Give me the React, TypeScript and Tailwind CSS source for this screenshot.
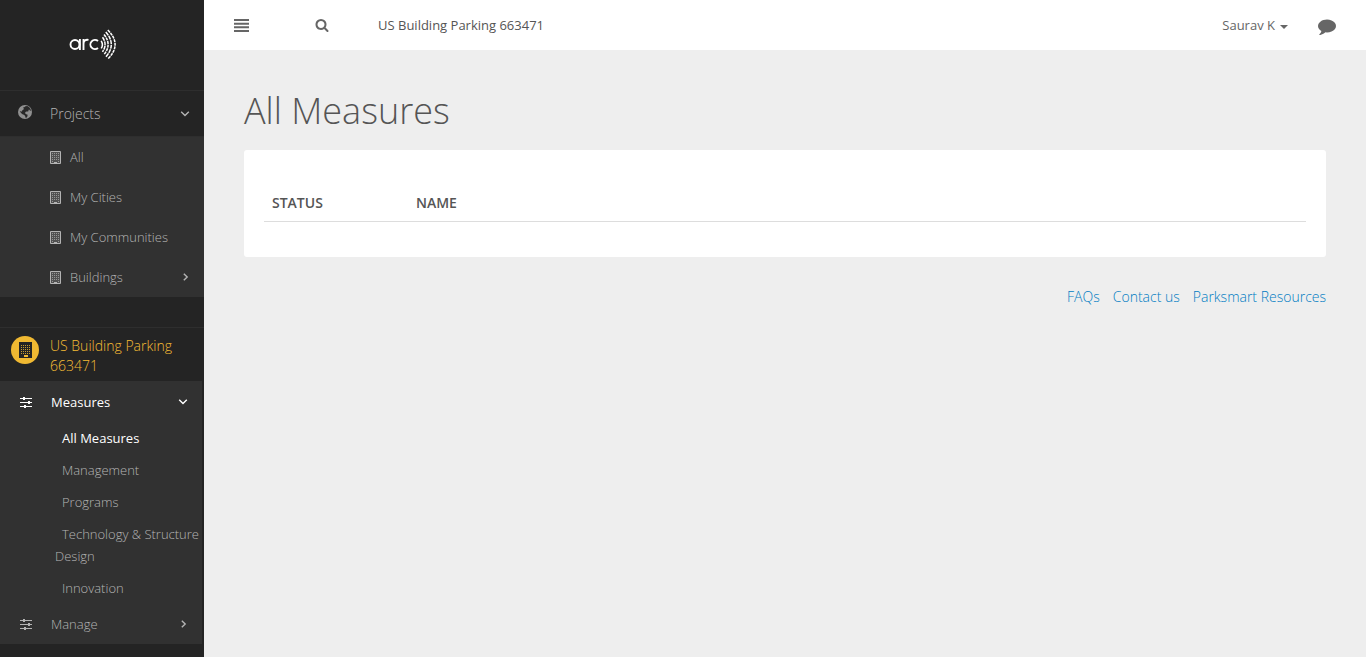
import type { ReactNode } from "react";

function Logo() {
  return (
    <svg className="h-8 w-12" viewBox="0 0 48 32" fill="none" stroke="#fff" role="img" aria-label="arc">
      <g strokeWidth="1.900">
        <circle cx="6" cy="15.500" r="4.500" />
        <path d="M10.900 10v11M14.500 21V10M14.500 15c0-3.200 2-4.600 5-4.100M29 12a4.600 4.600 0 1 0 0 7" />
      </g>
      <g strokeWidth="1.500">
        <path d="M32.200 11.800q2.400 4 0 7.600" />
        <path d="M33.500 8.300q5.200 7.200 0 14.600" strokeDasharray="4 .6" />
        <path d="M35 5.500q8.200 10 0 20" strokeDasharray="3 .7" />
        <path d="M36.800 3q11 12.500 0 25" strokeDasharray="4 .7" />
        <path d="M38.800 1q14.600 14.500 0 29" strokeDasharray="3 .7" />
      </g>
    </svg>
  );
}

function Globe() {
  return (
    <svg className="size-[14px]" viewBox="0 0 14 14" aria-hidden="true">
      <circle cx="7" cy="7" r="7" fill="#909090" />
      <path
        fill="#292929"
        d="M7.500 1.200 9.300 1l2 1.200 1.300 2 .3 1.800-1-.4-.7-1-.9.300.4 1.100-.9.600-1.300-.2-1.100.6-.3 1.300 1 1 1.300.3.200 1.300-.9 1.700-1 .3-.5-1.600-.9-1.300-1.800-.7-1.500-1.300L1.800 6l1.300.6.9-.2.3-1.100 1.300-.9.200-1L5 2.600l1.200-.3z"
      />
    </svg>
  );
}

function Building({ className = "" }: { className?: string }) {
  return (
    <svg className={className} viewBox="0 0 11 13" fill="none" stroke="currentColor" aria-hidden="true">
      <path fill="currentColor" fillOpacity=".25" d="M.5.500h10v12H.5z" />
      <path strokeOpacity=".7" strokeDasharray="1 1" d="M2 2.500h7M2 4.500h7M2 6.500h7M2 8.500h7" />
      <path strokeOpacity=".7" d="M2 10.500h1M8 10.500h1" />
      <path d="M4 11.500h3" />
    </svg>
  );
}

function Sliders() {
  return (
    <svg className="h-[11px] w-3" viewBox="0 0 12 11" stroke="currentColor" aria-hidden="true">
      <path d="M0 1.500h12M0 5.500h12M0 9.500h12" />
      <path strokeWidth="2" d="M4 0v3M9 4v3M5 8v3" />
    </svg>
  );
}

function Chevron({ down = false }: { down?: boolean }) {
  return (
    <svg className="size-[10px] shrink-0" viewBox="0 0 10 10" fill="none" stroke="currentColor" strokeWidth="1.400" aria-hidden="true">
      <path d={down ? "M1.200 2.800 5 6.500l3.800-3.700" : "M3.800 1.700 7.200 5 3.800 8.300"} />
    </svg>
  );
}

function ProjectLink({ children, expandable = false }: { children: ReactNode; expandable?: boolean }) {
  return (
    <li>
      <a href="#" className="flex h-10 items-center pr-[14px] pl-[50px] text-[13px] leading-5">
        <Building className="mr-[9px] h-[13px] w-[11px]" />
        <span className="grow">{children}</span>
        {expandable && <Chevron />}
      </a>
    </li>
  );
}

function MeasureLink({ children, active = false }: { children: ReactNode; active?: boolean }) {
  return (
    <li>
      <a
        href="#"
        className={
          active
            ? "block py-[5px] pl-[55px] indent-[7px] leading-[22px] font-normal text-white"
            : "block py-[5px] pl-[55px] indent-[7px] leading-[22px]"
        }
      >
        {children}
      </a>
    </li>
  );
}

function Sidebar() {
  return (
    <aside className="w-[204px] shrink-0 bg-[#242424] font-light text-[#b4b4b4]">
      <a href="#" className="flex h-[90px] items-center justify-center pr-[18px]">
        <Logo />
      </a>
      <nav aria-label="Projects">
        <button type="button" className="flex h-[46px] w-full items-center border-t border-[#2e2e2e] pr-[14px] pl-[18px] text-left text-sm">
          <span className="mr-[18px] pb-[3px]">
            <Globe />
          </span>
          <span className="grow">Projects</span>
          <Chevron down />
        </button>
        <ul className="border-t border-[#2e2e2e] bg-[#313131]">
          <ProjectLink>All</ProjectLink>
          <ProjectLink>My Cities</ProjectLink>
          <ProjectLink>My Communities</ProjectLink>
          <ProjectLink expandable>Buildings</ProjectLink>
        </ul>
      </nav>
      <nav aria-label="Current project" className="mt-[30px] border-t border-[#2e2e2e]">
        <a href="#" className="flex items-start gap-[11px] py-2 pr-4 pl-[11px] text-sm leading-5 text-[#f5bc34]">
          <span className="flex size-7 shrink-0 items-center justify-center rounded-full bg-[#f0b932]">
            <svg className="h-4 w-[13px]" viewBox="0 0 13 16" fill="none" aria-hidden="true">
              <path fill="#242424" d="M0 0h13v16H0z" />
              <path stroke="#f0b932" strokeOpacity=".8" strokeDasharray="1 1" d="M2 3.500h9M2 5.500h9M2 7.500h9M2 9.500h9M2 11.500h9" />
              <path stroke="#f0b932" strokeWidth="2" d="M5 14h4" />
            </svg>
          </span>
          <span className="-mb-[3px]">US Building Parking 663471</span>
        </a>
        <div className="mr-[2px] bg-[#313131] text-[13px]">
          <button type="button" className="flex h-[41px] w-full items-center pr-[14px] pl-5 text-left font-normal text-white">
            <span className="mr-[19px] pt-[2px]">
              <Sliders />
            </span>
            <span className="grow pt-[2px]">Measures</span>
            <Chevron down />
          </button>
          <ul>
            <MeasureLink active>All Measures</MeasureLink>
            <MeasureLink>Management</MeasureLink>
            <MeasureLink>Programs</MeasureLink>
            <MeasureLink>Technology &amp; Structure Design</MeasureLink>
            <MeasureLink>Innovation</MeasureLink>
          </ul>
          <button type="button" className="flex h-10 w-full items-center pr-[14px] pl-5 text-left">
            <span className="mr-[19px]">
              <Sliders />
            </span>
            <span className="grow pt-[2px]">Manage</span>
            <Chevron />
          </button>
        </div>
      </nav>
    </aside>
  );
}

function TopBar() {
  return (
    <header className="flex h-[50px] items-center bg-white px-[30px] text-[13px] leading-5 text-[#555]">
      <button type="button" aria-label="Toggle menu" className="mr-[66px] pt-px">
        <svg className="h-[13px] w-[15px]" viewBox="0 0 15 13" fill="#666">
          <path d="M0 0h15v2H0zM0 3.700h15v2H0zM0 7.300h15v2H0zM0 11h15v2H0z" />
        </svg>
      </button>
      <button type="button" aria-label="Search" className="mr-[49px]">
        <svg className="size-[14px]" viewBox="0 0 1792 1792" fill="#666">
          <path d="M1216 832q0-185-131.500-316.500t-316.500-131.500-316.500 131.500-131.500 316.500 131.500 316.500 316.500 131.500 316.500-131.500 131.500-316.500zm512 832q0 52-38 90t-90 38q-54 0-90-38l-343-342q-179 124-399 124-143 0-273.500-55.500t-225-150-150-225-55.500-273.500 55.500-273.500 150-225 225-150 273.500-55.500 273.500 55.500 225 150 150 225 55.500 273.500q0 220-124 399l343 343q37 37 37 90z" />
        </svg>
      </button>
      <span className="grow">US Building Parking 663471</span>
      <button type="button" className="mr-[30px] flex items-center gap-[5px] text-[#666]">
        Saurav K
        <svg className="mt-[3px] h-1 w-2" viewBox="0 0 8 4" fill="#666" aria-hidden="true">
          <path d="M0 0h8L4 4z" />
        </svg>
      </button>
      <button type="button" aria-label="Messages" className="pt-[2px]">
        <svg className="size-[18px]" viewBox="0 0 1792 1792" fill="#666">
          <path d="M1792 896q0 174-120 321.500t-326 233-450 85.500q-70 0-145-8-198 175-460 242-49 14-114 22-17 2-30.500-9t-17.500-29v-1q-3-4-.5-12t2-10 4.500-9.500l6-9 7-8.500 8-9q7-8 31-34.500t34.500-38 31-39.500 32.500-51 27-59 26-76q-157-89-247.500-220t-90.500-281q0-130 71-248.500t191-204.500 286-136.500 348-50.500q244 0 450 85.500t326 233 120 321.500z" />
        </svg>
      </button>
    </header>
  );
}

export default function App() {
  return (
    <div className="flex min-h-screen bg-[#eee] font-['Open_Sans',sans-serif]">
      <Sidebar />
      <div className="min-w-0 grow">
        <TopBar />
        <main className="px-10 pt-10">
          <h1 className="pt-px text-[36px] leading-10 font-light text-[#555]">All Measures</h1>
          <section className="mt-[19px] rounded-[3px] bg-white px-5 pt-[34px] pb-[35px]">
            <table className="w-full text-left text-sm leading-5 text-[#555]">
              <thead>
                <tr className="border-b border-[#ddd]">
                  <th scope="col" className="w-36 px-2 pt-[9px] pb-2 font-semibold">
                    STATUS
                  </th>
                  <th scope="col" className="px-2 pt-[9px] pb-2 font-semibold">
                    NAME
                  </th>
                </tr>
              </thead>
            </table>
          </section>
          <footer className="mt-[30px] flex justify-end gap-[13px] text-sm leading-5 font-light text-[#007cc3]">
            <a href="#">FAQs</a>
            <a href="#">Contact us</a>
            <a href="#">Parksmart Resources</a>
          </footer>
        </main>
      </div>
    </div>
  );
}
